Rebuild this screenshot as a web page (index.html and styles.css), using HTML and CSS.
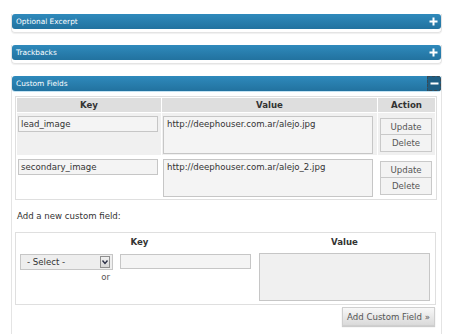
FILE: index.html
```html
<!DOCTYPE html>
<html>
	<head>
		<meta charset="UTF-8">
		<title>Custom Fields</title>
		<link rel="stylesheet" href="styles.css">
	</head>
	<body>
		<div class="wrap">
			<!-- closed boxes -->
			<div class="postbox closed">
				<h3 class="hndle">
					<span>Optional Excerpt</span>
					<span class="toggle"><svg width="9" height="9" viewBox="0 0 9 9"><path d="M3.5 0.5h2v3h3v2h-3v3h-2v-3h-3v-2h3z" fill="#fff"/></svg></span>
				</h3>
			</div>
			<div class="postbox closed">
				<h3 class="hndle">
					<span>Trackbacks</span>
					<span class="toggle"><svg width="9" height="9" viewBox="0 0 9 9"><path d="M3.5 0.5h2v3h3v2h-3v3h-2v-3h-3v-2h3z" fill="#fff"/></svg></span>
				</h3>
			</div>

			<!-- open box -->
			<div class="postbox open">
				<h3 class="hndle">
					<span>Custom Fields</span>
					<span class="toggle active"><svg width="9" height="9" viewBox="0 0 9 9"><rect x="0.5" y="3.5" width="8" height="2" fill="#fff"/></svg></span>
				</h3>
				<div class="inside">
					<table class="meta-list">
						<thead>
							<tr>
								<th class="col-key">Key</th>
								<th class="col-value">Value</th>
								<th class="col-action">Action</th>
							</tr>
						</thead>
						<tbody>
							<tr class="alt">
								<td><input class="text" value="lead_image"></td>
								<td><textarea class="val">http://deephouser.com.ar/alejo.jpg</textarea></td>
								<td class="acts"><button class="btn">Update</button><button class="btn">Delete</button></td>
							</tr>
							<tr>
								<td><input class="text" value="secondary_image"></td>
								<td><textarea class="val">http://deephouser.com.ar/alejo_2.jpg</textarea></td>
								<td class="acts"><button class="btn">Update</button><button class="btn">Delete</button></td>
							</tr>
						</tbody>
					</table>

					<p class="add-label">Add a new custom field:</p>

					<div class="newmeta">
						<div class="nm-head nm-key-head">Key</div>
						<div class="nm-head">Value</div>
						<div class="nm-select">
							<div class="select-wrap">
								<select class="sel"><option>- Select -</option></select>
								<span class="arrow"><svg width="8" height="10" viewBox="0 0 8 10"><path d="M1.5 3.5l2.5 3 2.5-3" fill="none" stroke="#2a2f45" stroke-width="1.4"/></svg></span>
							</div>
							<span class="or">or</span>
						</div>
						<div><input class="text nm-key"></div>
						<div><textarea class="nm-value"></textarea></div>
					</div>

					<div class="submit-row">
						<button class="btn add">Add Custom Field &raquo;</button>
					</div>
				</div>
			</div>
		</div>
	</body>
</html>
```

FILE: styles.css
```css
*{box-sizing: border-box;}
body{margin: 0; background: #fff; font-family: "DejaVu Sans", Verdana, sans-serif; font-size: 8.6px; color: #333;}

.wrap{padding: 14px 8px 0 11px;}

.postbox{margin-bottom: 12px; border: 1px solid #e4e4e4; border-top: 0;}
.postbox.closed{border-radius: 0 0 4px 4px; padding-bottom: 3px; box-shadow: 0 1px 1px #f0f0f0;}
.postbox.open{border-bottom: 0; margin-bottom: 0;}

.hndle{margin: 0; height: 15px; padding: 0 3px 0 4px; display: flex; align-items: center; justify-content: space-between;
		background: linear-gradient(#2f8abc, #22729f); border-radius: 3px; color: #fff; font-size: 7.4px; font-weight: normal;}
.open .hndle{box-shadow: 0 1px 0 #c4e3f3;}
.toggle{display: flex; align-items: center;}
.toggle.active{width: 14px; height: 15px; margin-right: -3px; justify-content: center; background: #1e5e83;
		outline: 1px dashed #3a4a55; outline-offset: -1px; border-radius: 0 3px 3px 0;}

.inside{padding: 5px 4px 20px 3px;}

/* existing fields */
.meta-list{width: 100%; border: 1px solid #dfdfdf; border-spacing: 1px;}
.meta-list th{height: 14px; padding: 0; background: #dedede; font-weight: bold; text-align: center; line-height: 14px;}
.col-key{width: 144px;}
.col-action{width: 57px;}
.meta-list td{padding: 3px 2px 1px 1px; vertical-align: top;}
.meta-list tr.alt td{background: #f0f0f0;}
.meta-list td.acts{padding-left: 2px; padding-top: 5px;}

.text{display: block; width: 140px; height: 16px; padding: 0 2px; border: 1px solid #c6c6c6; background: #f4f4f4;
		font-family: inherit; font-size: 8.6px; color: #333;}
.val{display: block; width: 210px; height: 38px; padding: 2px 3px; border: 1px solid #c6c6c6; background: #f4f4f4;
		font-family: inherit; font-size: 8.6px; color: #333; resize: none;}

.btn{display: block; width: 52px; height: 17px; padding: 0; border: 1px solid #c9c9c9; background: #f3f3f3;
		font-family: inherit; font-size: 8.6px; color: #555;}
.acts .btn + .btn{border-top: 0;}

.add-label{margin: 10px 0 10px 2px; line-height: 12px;}

/* new field */
.newmeta{margin-right: 1px; border: 1px solid #dfdfdf; padding: 4px 5px 3px 4px;
		display: grid; grid-template-columns: 100px 139px 171px; row-gap: 5px;}
.nm-head{font-weight: bold; text-align: center; line-height: 11px;}
.nm-key-head{grid-column: span 2;}
.nm-select{display: flex; flex-direction: column; width: 93px; padding-top: 1px;}
.select-wrap{position: relative; height: 16px;}
.sel{appearance: none; -webkit-appearance: none; width: 93px; height: 16px; padding: 0 6px; border: 1px solid #c6c6c6;
		border-radius: 0; background: #eeeeee; font-family: inherit; font-size: 8.6px; color: #333;}
.arrow{position: absolute; top: 2px; right: 3px; width: 10px; height: 12px; display: flex; align-items: center;
		justify-content: center; border: 1px solid #8f8f8f; background: linear-gradient(#f0f0f0, #d6d6d6);}
.or{align-self: flex-end; margin: 3px 3px 0 0; line-height: 9px; color: #555;}
.nm-key{width: 131px; height: 15px; margin-top: 1px;}
.nm-value{display: block; width: 171px; height: 48px; border: 1px solid #c6c6c6; background: #f0f0f0; resize: none;}

.submit-row{display: flex; justify-content: flex-end; margin: 2px 2px 0 0;}
.btn.add{width: 93px; height: 19px; background: linear-gradient(#f8f8f8, #dadada); border-color: #cfcfcf;
		box-shadow: 0 1px 1px #ccc; color: #555;}
```
